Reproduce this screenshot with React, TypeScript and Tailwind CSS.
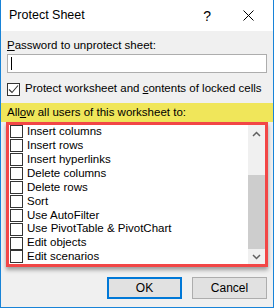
import { useState } from "react";

const permissions = [
    "Insert columns",
    "Insert rows",
    "Insert hyperlinks",
    "Delete columns",
    "Delete rows",
    "Sort",
    "Use AutoFilter",
    "Use PivotTable & PivotChart",
    "Edit objects",
    "Edit scenarios",
];

function Box({ checked }: { checked?: boolean }) {
    return (
        <span className="w-[13px] h-[13px] shrink-0 border border-[#333333] bg-white flex items-center justify-center">
            {checked && (
                <svg width="11" height="11" viewBox="0 0 11 11">
                    <path d="M1 5.5 L4 8.5 L10 1.5" fill="none" stroke="#333" strokeWidth="1.1" />
                </svg>
            )}
        </span>
    );
}

export default function App() {
    const [protect, setProtect] = useState(true);

    return (
        <div
            className="w-[274px] h-[308px] flex flex-col bg-[#f0f0f0] border-x border-b border-[#1883d7] text-[11.5px] text-black overflow-hidden whitespace-nowrap"
            style={{ fontFamily: '"Liberation Sans", Arial, sans-serif' }}
        >
            {/* title bar */}
            <div className="h-[31px] bg-white flex items-center shrink-0">
                <span className="pl-[8px] text-[12.5px]">Protect Sheet</span>
                <span className="ml-auto mr-[32px] text-[14px] leading-none">?</span>
                <svg width="11" height="11" viewBox="0 0 11 11" className="mr-[19px]">
                    <path d="M0.5 0.5 L10.5 10.5 M10.5 0.5 L0.5 10.5" stroke="#000" strokeWidth="1" />
                </svg>
            </div>

            <div className="px-[6px] pt-[7px]">
                <div className="leading-[14px]">
                    <span className="underline">P</span>assword to unprotect sheet:
                </div>
                <div className="mt-[2px] h-[19px] bg-white border border-[#adadad] flex items-center pl-[3px]">
                    <span className="w-px h-[13px] bg-black" />
                </div>

                <label className="mt-[9px] flex items-center gap-[5px] h-[14px]" onClick={() => setProtect(!protect)}>
                    <Box checked={protect} />
                    <span>
                        Protect worksheet and <span className="underline">c</span>ontents of locked cells
                    </span>
                </label>
            </div>

            <div className="mt-[7px] h-[19px] bg-[#f0e65a] px-[6px] flex items-center">
                All<span className="underline">o</span>w all users of this worksheet to:
            </div>

            <div className="mx-[5px] h-[145px] shrink-0 border-[3px] border-[#f24646] bg-white flex shadow-[0_3px_4px_rgba(0,0,0,0.35)]">
                <ul className="flex-1 pl-[1px]">
                    {permissions.map((p) => (
                        <li key={p} className="h-[13.9px] flex items-center gap-[4px]">
                            <Box />
                            <span className="leading-none">{p}</span>
                        </li>
                    ))}
                </ul>
                <div className="w-[17px] bg-[#f0f0f0] flex flex-col">
                    <div className="h-[17px] flex items-center justify-center">
                        <svg width="9" height="6" viewBox="0 0 9 6">
                            <path d="M1 5 L4.5 1.5 L8 5" fill="none" stroke="#606060" strokeWidth="1.5" />
                        </svg>
                    </div>
                    <div className="h-[33px]" />
                    <div className="flex-1 bg-[#cdcdcd]" />
                    <div className="h-[15px] flex items-center justify-center">
                        <svg width="9" height="6" viewBox="0 0 9 6">
                            <path d="M1 1 L4.5 4.5 L8 1" fill="none" stroke="#606060" strokeWidth="1.5" />
                        </svg>
                    </div>
                </div>
            </div>

            <div className="mt-[10px] flex justify-end gap-[10px] pr-[6px]">
                <button className="w-[75px] h-[22px] bg-[#e1e1e1] border-2 border-[#0078d7] text-[12px]">OK</button>
                <button className="w-[75px] h-[22px] bg-[#e1e1e1] border border-[#adadad] text-[12px]">Cancel</button>
            </div>
        </div>
    );
}
